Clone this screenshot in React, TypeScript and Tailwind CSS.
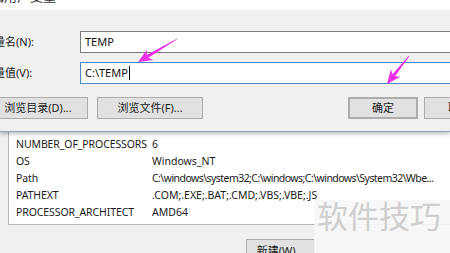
const font = { fontFamily: '"Noto Sans", "Noto Sans CJK SC", sans-serif' };

const rows = [
  ["NUMBER_OF_PROCESSORS", "6"],
  ["OS", "Windows_NT"],
  ["Path", "C:\\windows\\system32;C:\\windows;C:\\windows\\System32\\Wbe..."],
  ["PATHEXT", ".COM;.EXE;.BAT;.CMD;.VBS;.VBE;.JS"],
  ["PROCESSOR_ARCHITECT", "AMD64"],
];

/// Magenta annotation arrow, tip first, tail second.
function Arrow({ tip, tail }: { tip: [number, number]; tail: [number, number] }) {
  const dx = tail[0] - tip[0];
  const dy = tail[1] - tip[1];
  const len = Math.hypot(dx, dy);
  const ux = dx / len;
  const uy = dy / len;
  const px = -uy;
  const py = ux;
  const head = 14;
  const hw = 6;
  const bx = tip[0] + ux * head;
  const by = tip[1] + uy * head;
  const nx = tip[0] + ux * (head - 3);
  const ny = tip[1] + uy * (head - 3);
  const pts = [
    [tip[0], tip[1]],
    [bx + px * hw, by + py * hw],
    [nx + px * 1.6, ny + py * 1.6],
    [tail[0] + px * 0.4, tail[1] + py * 0.4],
    [tail[0] - px * 0.4, tail[1] - py * 0.4],
    [nx - px * 1.6, ny - py * 1.6],
    [bx - px * hw, by - py * hw],
  ]
    .map((p) => p.join(","))
    .join(" ");
  return <polygon points={pts} fill="#ec2ee6" />;
}

function WinButton({ children, className }: { children: React.ReactNode; className: string }) {
  return (
    <div
      className={`shrink-0 h-[22px] flex items-center justify-center bg-[#e1e1e1] border border-[#adadad] text-[11px] text-[#1a1a1a] whitespace-nowrap ${className}`}
    >
      {children}
    </div>
  );
}

export default function App() {
  return (
    <div className="relative w-[450px] h-[253px] overflow-hidden bg-[#f0f0f0]" style={font}>
      {/* edit variable dialog, on top */}
      <div className="relative z-10 h-[132px] bg-[#f0f0f0] border-b border-[#8aa4bd] shadow-[0_2px_4px_rgba(0,0,0,0.25)]">
        <div className="h-[10px] bg-white overflow-hidden">
          <div className="-mt-[12px] -ml-[22px] text-[13px] leading-[16px] text-[#333]">编辑用户变量</div>
        </div>
        <div className="flex items-center mt-[21px] h-[22px]">
          <div className="shrink-0 w-[97px] -ml-[17px] text-[11px] text-[#1a1a1a]">变量名(N):</div>
          <div className="flex-1 -mr-4 h-[22px] bg-white border border-[#7a7a7a] flex items-center pl-[4px] text-[11px] text-[#111]">
            TEMP
          </div>
        </div>
        <div className="flex items-center mt-[9px] h-[22px]">
          <div className="shrink-0 w-[97px] -ml-[17px] text-[11px] text-[#1a1a1a]">变量值(V):</div>
          <div className="flex-1 -mr-4 h-[22px] bg-white border border-[#4a88c6] flex items-center pl-[4px] text-[11px] text-[#111]">
            C:\TEMP
            <span className="ml-[1px] w-px h-[14px] bg-black" />
          </div>
        </div>
        <div className="flex mt-[13px]">
          <WinButton className="w-[100px] -ml-[12px]">浏览目录(D)...</WinButton>
          <WinButton className="w-[106px] ml-[9px]">浏览文件(F)...</WinButton>
          <WinButton className="w-[70px] ml-[145px] border-2 border-[#3f86c9]">确定</WinButton>
          <WinButton className="w-[70px] ml-[6px]">取消</WinButton>
        </div>
      </div>

      {/* environment variables window underneath */}
      <div className="ml-[8px] -mt-[4px] w-[460px] h-[97px] bg-white border-l border-b border-[#b9b9b9] pt-[8px]">
        {rows.map(([k, v]) => (
          <div key={k} className="flex h-[17px] items-center text-[10.5px] text-[#1a1a1a] whitespace-nowrap">
            <div className="shrink-0 w-[143px] pl-[7px] tracking-[-0.1px]">{k}</div>
            <div className={k === "Path" ? "tracking-[-0.55px]" : ""}>{v}</div>
          </div>
        ))}
      </div>
      <div className="flex mt-[14px]">
        <WinButton className="ml-[246px] w-[69px] h-[24px]">新建(W)...</WinButton>
      </div>

      {/* watermark */}
      <div className="absolute left-[314px] top-[200px] w-[136px] h-[53px] bg-[#f7f7f7]/90 pt-[1px] pl-[3px]">
        <span className="text-[31px] leading-[31px] text-[#cfcfcf] whitespace-nowrap">软件技巧</span>
      </div>

      <svg className="absolute inset-0 z-20 pointer-events-none" width="450" height="253">
        <Arrow tip={[138, 62]} tail={[177, 39]} />
        <Arrow tip={[387, 84]} tail={[409, 56]} />
      </svg>
    </div>
  );
}
